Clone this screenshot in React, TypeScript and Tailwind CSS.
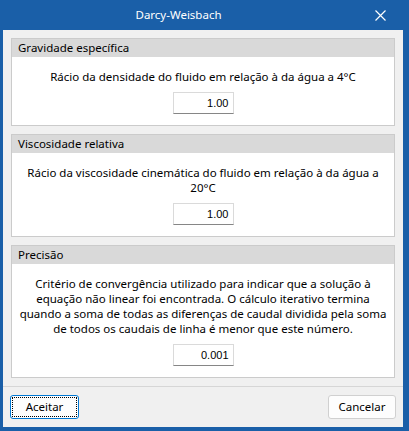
import React from "react";

const font = { fontFamily: '"Noto Sans", "Open Sans", sans-serif' };

function Section({ title, lines, value }: { title: string; lines: string[]; value: string }) {
  return (
    <div className="border border-[#cbcbcb] bg-white flex flex-col">
      <div className="h-[18px] bg-[#d9d9d9] flex items-center pl-[6px] text-[11.5px] text-black leading-[18px]">{title}</div>
      <div className="flex flex-col items-center pt-[12px] pb-[11px]">
        <div className="text-center text-[11.5px] leading-[15px] text-black">
          {lines.map((l, i) => (
            <div key={i} className="whitespace-nowrap">{l}</div>
          ))}
        </div>
        <div
          className="mt-[8px] w-[61px] h-[22px] bg-white border border-[#dadada] border-b-[#868686] flex items-center justify-end pr-[4px] text-[11px] text-black"
          style={{ fontFamily: '"Liberation Sans", Arial, sans-serif' }}
        >
          {value}
        </div>
      </div>
    </div>
  );
}

export default function App() {
  return (
    <div className="w-[409px] h-[431px] bg-[#1a5fa8] flex flex-col" style={font}>
      <div className="h-[30px] flex items-center shrink-0">
        <div className="flex-1 text-center text-white text-[11.5px]">Darcy-Weisbach</div>
        <div className="w-[46px] h-[30px] flex items-center justify-center">
          <svg width="11" height="11" viewBox="0 0 11 11">
            <path d="M0.5 0.5 L10.5 10.5 M10.5 0.5 L0.5 10.5" stroke="white" strokeWidth="1.2" fill="none" />
          </svg>
        </div>
        <div className="w-[6px]" />
      </div>
      <div className="ml-[3px] mr-[6px] h-[397px] bg-[#f0f0f0] flex flex-col">
        <div className="px-[8px] pt-[8px] flex flex-col gap-[8px]">
          <Section
            title="Gravidade específica"
            lines={["Rácio da densidade do fluido em relação à da água a 4°C"]}
            value="1.00"
          />
          <Section
            title="Viscosidade relativa"
            lines={["Rácio da viscosidade cinemática do fluido em relação à da água a", "20°C"]}
            value="1.00"
          />
          <Section
            title="Precisão"
            lines={[
              "Critério de convergência utilizado para indicar que a solução à",
              "equação não linear foi encontrada. O cálculo iterativo termina",
              "quando a soma de todas as diferenças de caudal dividida pela soma",
              "de todos os caudais de linha é menor que este número.",
            ]}
            value="0.001"
          />
        </div>
        <div className="mt-auto h-[41px] border-t border-[#d6d6d6] flex items-center justify-between pl-[7px] pr-[7px]">
          <div className="w-[69px] h-[24px] rounded-[3px] border border-[#0078d4] bg-[#fdfdfd] p-[1px]">
            <div className="w-full h-full border border-dotted border-black flex items-center justify-center text-[11.5px] text-black">
              Aceitar
            </div>
          </div>
          <div className="w-[68px] h-[24px] rounded-[3px] border border-[#d0d0d0] bg-[#fdfdfd] flex items-center justify-center text-[11.5px] text-black">
            Cancelar
          </div>
        </div>
      </div>
    </div>
  );
}
